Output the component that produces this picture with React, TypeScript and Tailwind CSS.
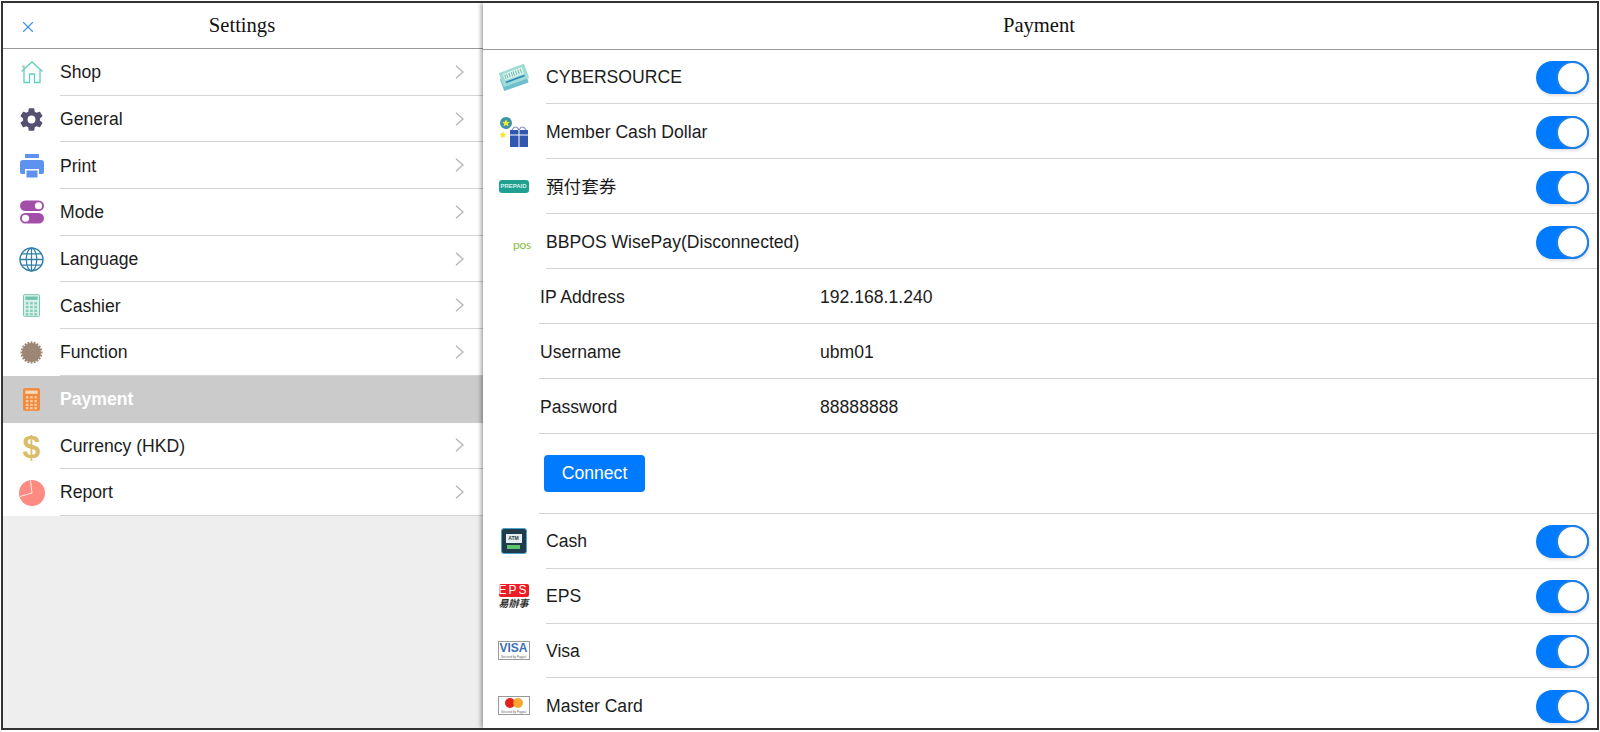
import { X } from "lucide-react";
import type { ReactNode } from "react";

const ShopIcon = () => (
  <svg viewBox="0 0 24 24" className="h-[24px] w-[24px]" fill="none" stroke="#62cdbb" strokeWidth="1.3">
    <path d="M1.500 11.500 12 2l10.500 9.500" />
    <path d="M2 6.500h2v3" stroke="#8fc9a0" />
    <path d="M4 10v12.500h5.500V14h5v8.500H20V10" />
  </svg>
);

const GearIcon = () => (
  <svg viewBox="0 0 24 24" className="h-[27px] w-[27px]" fill="#54506f">
    <path d="M19.430 12.980c.04-.32.07-.64.07-.98s-.03-.66-.07-.98l2.110-1.650a.5.5 0 0 0 .12-.64l-2-3.460a.5.5 0 0 0-.61-.22l-2.490 1a7.300 7.300 0 0 0-1.690-.98l-.38-2.650A.49.49 0 0 0 14 2h-4a.49.49 0 0 0-.49.42l-.38 2.650c-.61.25-1.170.59-1.690.98l-2.490-1a.5.5 0 0 0-.61.22l-2 3.460a.49.49 0 0 0 .12.64l2.110 1.650c-.04.32-.07.65-.07.98s.03.66.07.98l-2.110 1.650a.5.5 0 0 0-.12.64l2 3.460c.12.22.39.3.61.22l2.490-1c.52.4 1.080.73 1.690.98l.38 2.650c.03.24.24.42.49.42h4c.25 0 .46-.18.49-.42l.38-2.650c.61-.25 1.170-.59 1.690-.98l2.490 1c.23.09.49 0 .61-.22l2-3.460a.5.5 0 0 0-.12-.64l-2.110-1.650zM12 15.500a3.500 3.500 0 1 1 0-7 3.500 3.500 0 0 1 0 7z" />
  </svg>
);

const PrintIcon = () => (
  <svg viewBox="0 0 24 24" className="h-[24px] w-[24px]" fill="#5d93ef">
    <rect x="5" y="0" width="14" height="4" rx="0.5" />
    <path d="M3 6h18a3 3 0 0 1 3 3v9a2 2 0 0 1-2 2h-3v-5H5v5H2a2 2 0 0 1-2-2V9a3 3 0 0 1 3-3z" />
    <rect x="6.500" y="16.500" width="11" height="7" />
  </svg>
);

const ModeIcon = () => (
  <svg viewBox="0 0 24 24" className="h-[24px] w-[24px]">
    <rect x="0" y="0.500" width="24" height="10.500" rx="5.250" fill="#a34ea8" />
    <circle cx="18.500" cy="5.750" r="3.600" fill="#fff" />
    <rect x="0" y="13" width="24" height="10.500" rx="5.250" fill="#a34ea8" />
    <circle cx="5.500" cy="18.250" r="3.600" fill="#fff" />
  </svg>
);

const GlobeIcon = () => (
  <svg viewBox="0 0 24 24" className="h-[25px] w-[25px]" fill="none" stroke="#317fa8" strokeWidth="1.2">
    <circle cx="12" cy="12" r="11" strokeWidth="1.400" />
    <ellipse cx="12" cy="12" rx="5" ry="11" />
    <path d="M12 1v22M1 12h22M2.500 6.500h19M2.500 17.500h19" />
  </svg>
);

const CalcIcon = ({ body, lines }: { body: string; lines: string }) => (
  <svg viewBox="0 0 18 24" className="h-[23px] w-[17px]">
    <rect x="0.500" y="0.500" width="17" height="23" rx="1" fill={body} stroke={body === "#f08a3c" ? body : lines} />
    <rect x="2.500" y="2.500" width="13" height="3.500" fill={lines} />
    {[8.500, 12.500, 16.500, 20].map((y) =>
      [3, 7.500, 12].map((x) => <rect key={`${x}-${y}`} x={x} y={y} width="2.800" height="2.400" fill={lines} opacity="0.8" />)
    )}
  </svg>
);

const SealIcon = () => (
  <svg viewBox="0 0 24 24" className="h-[23px] w-[23px]" fill="#9c8675">
    <circle cx="12" cy="12" r="9.800" />
    {Array.from({ length: 20 }).map((_, i) => (
      <rect key={i} x="11" y="0.500" width="2" height="4" transform={`rotate(${i * 18} 12 12)`} />
    ))}
  </svg>
);

const DollarIcon = () => (
  <span className="mt-[2px] font-['Liberation_Sans',sans-serif] text-[32px] leading-none font-bold text-[#d9bd69]">$</span>
);

const ReportIcon = () => (
  <svg viewBox="0 0 26 26" className="h-[26px] w-[26px]">
    <circle cx="13" cy="13" r="13" fill="#fd8b82" />
    <path d="M13 13 11.500 0.500M13 13 1 16.500" stroke="#fff" strokeWidth="0.8" />
  </svg>
);

const TicketIcon = () => (
  <svg viewBox="0 0 32 28" className="h-[28px] w-[32px]">
    <g transform="rotate(-20 16 14)">
      <rect x="2" y="11" width="26" height="13" rx="1" fill="#6fbfd0" />
      <rect x="3" y="5" width="27" height="15" rx="1" fill="#9fdcd4" />
      <rect x="6.500" y="7.500" width="20" height="6.500" fill="#e4f5ee" />
      <path d="M8 8.500v4.500M10 8.500v4.500M12.500 8.500v4.500M15 8.500v4.500M17 8.500v4.500M19.500 8.500v4.500M22 8.500v4.500M24.500 8.500v4.500" stroke="#6cb9b0" strokeWidth="1" />
      <rect x="6.500" y="15.500" width="20" height="1.600" fill="#2f84bd" />
    </g>
  </svg>
);

const GiftIcon = () => (
  <svg viewBox="0 0 30 30" className="h-[30px] w-[30px]">
    <circle cx="7" cy="6" r="6" fill="#3b93a8" />
    <path d="m7 2.200 1.200 2.500 2.700.3-2 1.800.6 2.700L7 8.100l-2.500 1.400.6-2.700-2-1.800 2.700-.3z" fill="#f3e53a" />
    <path d="m4 14.500 1.300 2 2.200.7-1.700 1.400-.1 2.400L4 19.700l-2 1.300.1-2.400-1.700-1.400 2.200-.7z" fill="#f5e82e" />
    <rect x="11" y="13" width="18" height="17" fill="#3058ae" />
    <path d="M13 13c2-4 5-4 7 0 2-4 5-4 7 0" fill="none" stroke="#8793c4" strokeWidth="1.200" />
    <path d="M11 18h18M20 13v17" stroke="#fff" strokeWidth="1" />
  </svg>
);

const PrepaidIcon = () => (
  <span className="flex h-[13px] w-[30px] items-center justify-center rounded-[3px] bg-[#20a090] font-['Liberation_Sans',sans-serif] text-[6px] font-bold text-[#d8f2ee]">
    PREPAID
  </span>
);

const PosIcon = () => (
  <span className="mt-[6px] ml-[17px] font-['Lato',sans-serif] text-[12px] leading-none tracking-[-0.3px] text-[#86bd3c]">pos</span>
);

const AtmIcon = () => (
  <span className="flex h-[26px] w-[26px] flex-col items-center justify-center gap-[2px] rounded-[3px] border border-[#4aa3cf] bg-[#1f3c4d]">
    <span className="h-[9px] w-[16px] bg-[#e8eef0] text-center font-['Liberation_Sans',sans-serif] text-[5px] leading-[9px] font-bold text-[#1f3c4d]">ATM</span>
    <span className="h-[4px] w-[13px] bg-[#5fc46e]" />
  </span>
);

const EpsIcon = () => (
  <span className="flex w-[30px] flex-col items-center leading-none">
    <span className="h-[13px] w-[30px] rounded-[2px] bg-[#ee1c25] text-center font-['Liberation_Sans',sans-serif] text-[12px] leading-[13px] tracking-[2px] text-white">EPS</span>
    <span className="mt-[1px] font-['Noto_Sans_CJK_TC',sans-serif] text-[10px] leading-[10px] font-bold text-[#333] italic">易辦事</span>
  </span>
);

const CardFrame = ({ children }: { children: ReactNode }) => (
  <span className="flex h-[19px] w-[32px] flex-col items-center justify-between border border-[#999] font-['Liberation_Sans',sans-serif] leading-none">
    {children}
    <span className="text-[3px] leading-[4px] text-[#666]">Secured by Paypal</span>
  </span>
);

const VisaIcon = () => (
  <CardFrame>
    <span className="text-[12px] leading-[13px] font-bold text-[#3d6fb4]">VISA</span>
  </CardFrame>
);

const MasterIcon = () => (
  <CardFrame>
    <span className="mt-[1px] flex">
      <span className="h-[10px] w-[10px] rounded-full bg-[#e2231a]" />
      <span className="-ml-[2px] h-[10px] w-[10px] rounded-full bg-[#f79e1b] opacity-90" />
    </span>
  </CardFrame>
);

const Toggle = () => (
  <div className="flex h-[33px] w-[53px] justify-end rounded-full bg-[#007aff] shadow-[1px_2px_3px_rgba(0,0,0,0.12)]">
    <div className="h-[33px] w-[33px] rounded-full border-2 border-[#1f7fe6] bg-white" />
  </div>
);

const Chevron = () => (
  <svg viewBox="0 0 9 14" className="h-[14px] w-[9px]" fill="none" stroke="#b8b8b8" strokeWidth="1.500">
    <path d="M1 .8 8 7l-7 6.200" />
  </svg>
);

const menu: { label: string; icon: ReactNode; active?: boolean }[] = [
  { label: "Shop", icon: <ShopIcon /> },
  { label: "General", icon: <GearIcon /> },
  { label: "Print", icon: <PrintIcon /> },
  { label: "Mode", icon: <ModeIcon /> },
  { label: "Language", icon: <GlobeIcon /> },
  { label: "Cashier", icon: <CalcIcon body="#d8f0e8" lines="#6fc4ae" /> },
  { label: "Function", icon: <SealIcon /> },
  { label: "Payment", icon: <CalcIcon body="#f08a3c" lines="#fbd9b8" />, active: true },
  { label: "Currency (HKD)", icon: <DollarIcon /> },
  { label: "Report", icon: <ReportIcon /> },
];

function MenuRow({ label, icon, active }: { label: string; icon: ReactNode; active?: boolean }) {
  return (
    <div className={`flex h-[46.700px] shrink-0 items-stretch ${active ? "bg-[#cbcbcb]" : "bg-white"}`}>
      <div className="flex w-[57px] shrink-0 items-center justify-center">{icon}</div>
      <div className={`flex flex-1 items-center justify-between pr-[19px] text-[17.600px] ${active ? "font-bold text-white" : "border-b border-[#d4d4d4] text-[#1c1c1c]"}`}>
        <span className="pt-[1px]">{label}</span>
        {!active && <Chevron />}
      </div>
    </div>
  );
}

function PayRow({ label, icon }: { label: string; icon: ReactNode }) {
  return (
    <div className="flex h-[54.900px] shrink-0 items-stretch">
      <div className="flex w-[63px] shrink-0 items-center justify-center pr-[2px]">{icon}</div>
      <div className="flex flex-1 items-center justify-between border-b border-[#d4d4d4] pt-[2px] pr-[8px] text-[17.600px] text-[#1c1c1c]">
        <span>{label}</span>
        <Toggle />
      </div>
    </div>
  );
}

function FieldRow({ label, value }: { label: string; value: string }) {
  return (
    <div className="ml-[56px] flex h-[54.900px] shrink-0 items-center border-b border-[#d4d4d4] pt-[2px] text-[17.600px] text-[#1c1c1c]">
      <span className="w-[281px] pl-px">{label}</span>
      <span>{value}</span>
    </div>
  );
}

export default function App() {
  return (
    <div className="h-[732px] w-[1600px] bg-white p-px font-['Liberation_Sans','Noto_Sans_CJK_TC',sans-serif]">
      <div className="flex h-[729px] overflow-hidden border-2 border-[#333]">
        <aside className="flex w-[480px] shrink-0 flex-col bg-[#eeeeee]">
          <header className="relative flex h-[46px] shrink-0 items-center justify-center border-b border-[#999] bg-white pr-[2px] font-['Liberation_Serif',serif] text-[20.600px] text-[#111]">
            <X size={18} strokeWidth={1.500} className="absolute top-[15px] left-[16px] text-[#3f8fe8]" />
            Settings
          </header>
          {menu.map((m) => (
            <MenuRow key={m.label} {...m} />
          ))}
        </aside>

        <main className="relative flex min-w-0 flex-1 flex-col bg-white shadow-[-2px_0_4px_rgba(0,0,0,0.35)]">
          <header className="flex h-[46.500px] shrink-0 items-center justify-center border-b border-[#999] pr-[2px] font-['Liberation_Serif',serif] text-[20.600px] text-[#111]">
            Payment
          </header>
          <PayRow label="CYBERSOURCE" icon={<TicketIcon />} />
          <PayRow label="Member Cash Dollar" icon={<GiftIcon />} />
          <PayRow label="預付套券" icon={<PrepaidIcon />} />
          <PayRow label="BBPOS WisePay(Disconnected)" icon={<PosIcon />} />
          <FieldRow label="IP Address" value="192.168.1.240" />
          <FieldRow label="Username" value="ubm01" />
          <FieldRow label="Password" value="88888888" />
          <div className="ml-[56px] flex h-[80px] shrink-0 items-center border-b border-[#d4d4d4] pl-[5px]">
            <button type="button" className="h-[37px] w-[101px] rounded-[4px] bg-[#007aff] text-[17.600px] text-white">
              Connect
            </button>
          </div>
          <PayRow label="Cash" icon={<AtmIcon />} />
          <PayRow label="EPS" icon={<EpsIcon />} />
          <PayRow label="Visa" icon={<VisaIcon />} />
          <PayRow label="Master Card" icon={<MasterIcon />} />
        </main>
      </div>
    </div>
  );
}
